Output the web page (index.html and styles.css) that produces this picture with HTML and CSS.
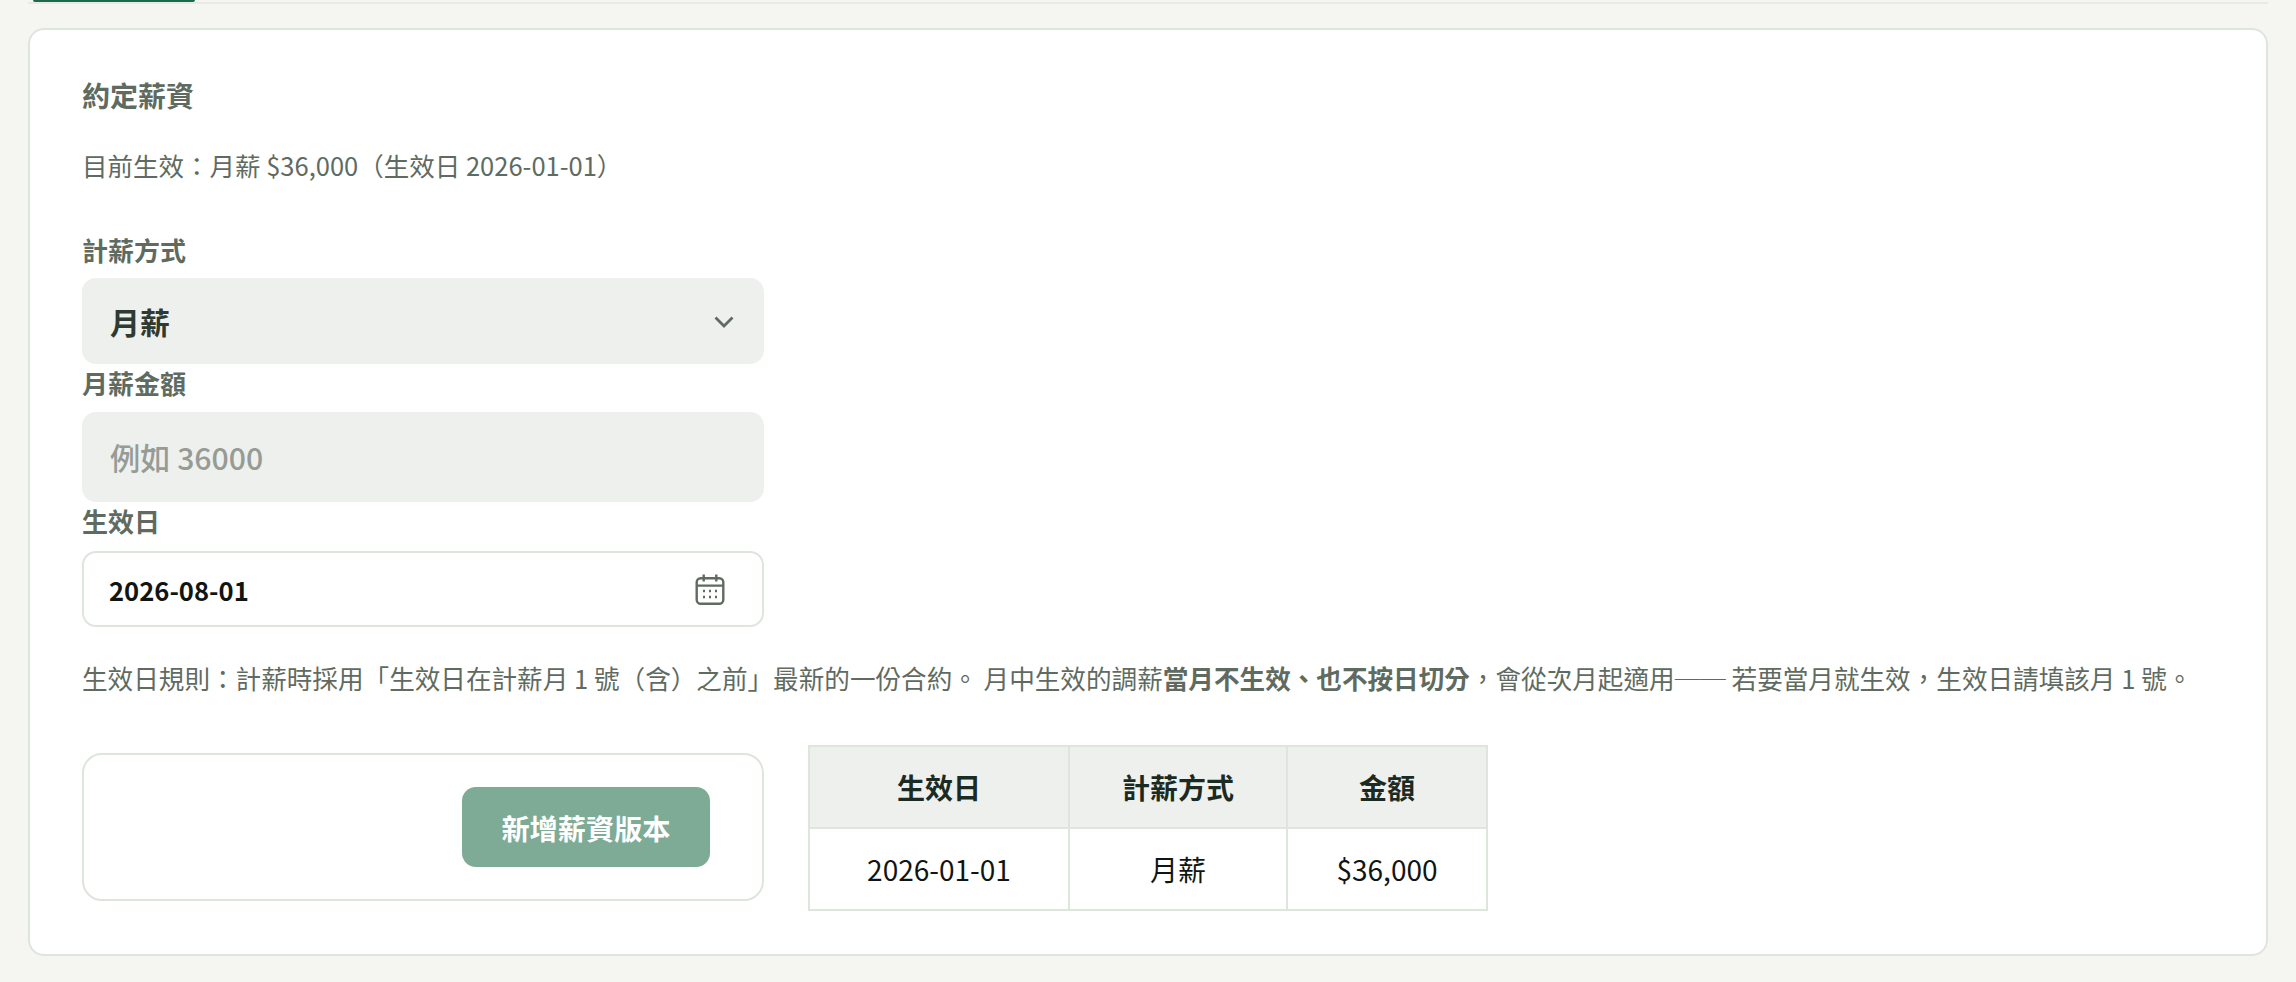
FILE: index.html
```html
<!DOCTYPE html>
<html lang="zh-Hant">
  <head>
    <meta charset="utf-8">
    <meta name="viewport" content="width=device-width, initial-scale=1">
    <title>約定薪資</title>
    <link rel="stylesheet" href="styles.css">
  </head>
  <body>
    <div class="tabs"><div class="tab_active"></div></div>

    <section class="card">
      <h3 class="card_title">約定薪資</h3>
      <p class="card_current">目前生效：月薪 $36,000（生效日 2026-01-01）</p>

      <div class="form">
        <label class="form_label">計薪方式</label>
        <div class="select_wrap">
          <select class="input-soft input-select">
            <option>月薪</option>
          </select>
          <svg class="select_arrow" width="20" height="12" viewBox="0 0 20 12" fill="none">
            <path d="M1.5 1.5L10 10L18.5 1.5" stroke="#5f6b60" stroke-width="2.8"/>
          </svg>
        </div>

        <label class="form_label">月薪金額</label>
        <input type="text" class="input-soft input-amount" placeholder="例如 36000">

        <label class="form_label">生效日</label>
        <div class="input-date">
          <input type="text" class="input-date_text" value="2026-08-01">
          <svg class="date_icon" width="30" height="31" viewBox="0 0 30 31" fill="none" stroke="#5f6b60" stroke-width="2.4">
            <rect x="1.7" y="4.2" width="26.6" height="25.6" rx="4"/>
            <path d="M1.7 11.6H28.3M8.7 0.5V7.5M21.3 0.5V7.5"/>
            <path d="M8 17H10M14 17H16M20 17H22M8 23H10M14 23H16M20 23H22"/>
          </svg>
        </div>
      </div>

      <p class="card_rule">生效日規則：計薪時採用「生效日在計薪月 1 號（含）之前」最新的一份合約。 月中生效的調薪<strong>當月不生效、也不按日切分</strong>，會從次月起適用── 若要當月就生效，生效日請填該月 1 號。</p>

      <div class="card_bottom">
        <div class="add_box">
          <button class="btn_add">新增薪資版本</button>
        </div>
        <table class="history">
          <thead>
            <tr><th class="col_date">生效日</th><th class="col_type">計薪方式</th><th class="col_amount">金額</th></tr>
          </thead>
          <tbody>
            <tr><td>2026-01-01</td><td>月薪</td><td>$36,000</td></tr>
          </tbody>
        </table>
      </div>
    </section>
  </body>
</html>
```

FILE: styles.css
```css
html, body{
  margin: 0;
  padding: 0;
  background-color: #F5F6F1;
  font-family: "Noto Sans CJK TC", "Noto Sans", sans-serif;
}
body{
  padding: 0 28px 26px 28px;
}
.tabs{
  height: 4px;
  border-bottom: 2px solid #E8EBE4;
  box-sizing: border-box;
  padding-left: 5px;
}
.tab_active{
  width: 162px;
  height: 2px;
  background: #1D6B4C;
  border-radius: 0 0 6px 6px;
}
.card{
  margin-top: 24px;
  height: 928px;
  box-sizing: border-box;
  background: #FFFFFF;
  border: 2px solid #DEE5DC;
  border-radius: 16px;
  padding: 45px 52px 0;
}
.card_title{
  margin: 0;
  font-size: 28px;
  line-height: 40px;
  font-weight: 700;
  color: #5F6B60;
}
.card_current{
  margin: 31px 0 0;
  font-size: 25.5px;
  line-height: 38px;
  color: #5F6B60;
}
.form{
  display: flex;
  flex-direction: column;
  width: 682px;
  margin-top: 47px;
}
.form_label{
  display: block;
  font-size: 26px;
  line-height: 38px;
  font-weight: 600;
  color: #5F6B60;
}
.select_wrap{
  position: relative;
  margin-top: 9px;
}
.input-soft{
  display: block;
  width: 100%;
  box-sizing: border-box;
  border: none;
  outline: none;
  appearance: none;
  background: #EEF0ED;
  border-radius: 14px;
  padding: 0 28px;
  font-family: inherit;
}
.input-select{
  height: 86px;
  font-size: 30px;
  font-weight: 600;
  color: #2F3A32;
}
.select_arrow{
  position: absolute;
  right: 30px;
  top: 38px;
}
.input-amount{
  height: 90px;
  margin-top: 10px;
  font-size: 30.2px;
  font-weight: 500;
}
.input-amount::placeholder{
  color: #969B95;
  opacity: 1;
}
.input-date{
  display: flex;
  align-items: center;
  justify-content: space-between;
  height: 76px;
  box-sizing: border-box;
  border: 2px solid #DEE5DC;
  border-radius: 14px;
  padding: 0 37px 0 25px;
  margin-top: 11px;
}
.input-date_text{
  flex: 1;
  min-width: 0;
  border: none;
  outline: none;
  padding: 0;
  background: none;
  font-family: inherit;
  font-size: 25.6px;
  font-weight: 600;
  color: #111511;
}
.date_icon{
  flex-shrink: 0;
}
.card_rule{
  margin: 32px 0 0;
  font-size: 25.6px;
  line-height: 38px;
  color: #5F6B60;
  white-space: nowrap;
}
.card_rule strong{
  font-weight: 700;
}
.card_bottom{
  display: flex;
  align-items: flex-start;
  gap: 44px;
  margin-top: 48px;
}
.add_box{
  display: flex;
  justify-content: flex-end;
  width: 682px;
  height: 148px;
  box-sizing: border-box;
  margin-top: 8px;
  padding: 32px 52px 0 0;
  border: 2px solid #DEE5DC;
  border-radius: 20px;
}
.btn_add{
  width: 248px;
  height: 80px;
  background: #7DAB96;
  border: none;
  border-radius: 14px;
  color: #FFFFFF;
  font-family: inherit;
  font-size: 28.2px;
  font-weight: 700;
}
.history{
  border-collapse: collapse;
  width: 680px;
  table-layout: fixed;
}
.history th, .history td{
  border: 2px solid #DEE5DC;
  height: 80px;
  padding: 0;
  text-align: center;
  font-size: 28px;
  color: #111511;
}
.history th{
  background: #EEF0ED;
  font-weight: 700;
  color: #1B2A22;
}
.history td{
  font-weight: 400;
}
.col_date{
  width: 258px;
}
.col_type{
  width: 216px;
}
```
